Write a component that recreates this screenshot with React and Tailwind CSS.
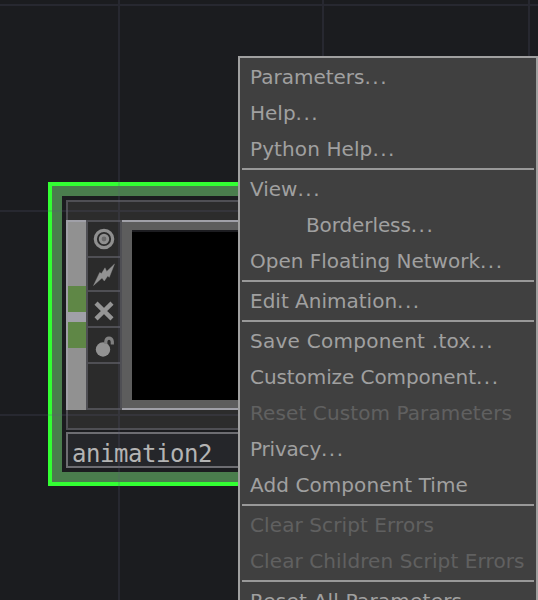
const menu = [
  { label: 'Parameters', dots: true },
  { label: 'Help', dots: true },
  { label: 'Python Help', dots: true, end: true, spacing: 'tracking-[0.1px]' },
  { label: 'View', dots: true },
  { label: 'Borderless', dots: true, indent: true, spacing: 'tracking-[-0.1px]' },
  { label: 'Open Floating Network', dots: true, end: true },
  { label: 'Edit Animation', dots: true, end: true },
  { label: 'Save Component .tox', dots: true, spacing: 'tracking-[0.26px]' },
  { label: 'Customize Component', dots: true, spacing: 'tracking-[-0.08px]' },
  { label: 'Reset Custom Parameters', disabled: true, spacing: 'tracking-[0.1px]' },
  { label: 'Privacy', dots: true, spacing: 'tracking-[-0.2px]' },
  { label: 'Add Component Time', end: true, spacing: 'tracking-[0.08px]' },
  { label: 'Clear Script Errors', disabled: true, spacing: 'tracking-[0.1px]' },
  { label: 'Clear Children Script Errors', disabled: true, end: true, spacing: 'tracking-[0.1px]' },
  { label: 'Reset All Parameters', spacing: 'tracking-[0.22px]' },
];

function ViewerIcon() {
  return (
    <svg width="32" height="34" viewBox="0 0 32 34" fill="none" stroke="#8f8f8f">
      <circle cx="16" cy="17" r="8.7" strokeWidth="3.2" />
      <circle cx="16" cy="17" r="3.8" strokeWidth="2.8" fill="#6a6a6a" />
    </svg>
  );
}

function BypassIcon() {
  return (
    <svg width="32" height="32" viewBox="0 0 32 32" fill="#929292" stroke="#929292" strokeWidth="0.4" strokeLinejoin="round">
      <path d="M5.5 27.5 11.7 14.5 13.5 15.5 17 9.8 18.7 13.4 26.5 6 21.3 19.3 19.7 18 16.3 23 14 20Z" />
    </svg>
  );
}

function CloseIcon() {
  return (
    <svg width="32" height="34" viewBox="0 0 32 34" stroke="#959595" strokeWidth="4.4">
      <path d="M8 11.2 24 26.8M24 11.2 8 26.8" />
    </svg>
  );
}

function LockIcon() {
  return (
    <svg width="32" height="34" viewBox="0 0 32 34">
      <circle cx="15" cy="21.5" r="7.2" fill="#929292" />
      <path d="M17.8 16V13.5Q18.2 10.2 21 10.2T24.3 13.5V16.5" fill="none" stroke="#808080" strokeWidth="3.2" />
    </svg>
  );
}

function OperatorNode() {
  return (
    <div className="absolute left-12 top-[182px] h-[304px] w-[260px] border-4 border-[#33ff33] bg-[#4a7d4d] p-[10px]">
      <div className="flex h-[276px] flex-col bg-[#1b1c1f] pl-1 pt-1">
        <div className="h-5 shrink-0 border-l-2 border-t-2 border-[#4f4f54] bg-[#2c2c2c]" />
        <div className="flex h-[190px] shrink-0">
          <div className="flex w-5 flex-col border-l-2 border-t-2 border-[#a0a0a8] bg-[#919191] pt-16">
            <div className="h-[26px] bg-[#5f8746]" />
            <div className="h-[10px] bg-[#a0a0a8]" />
            <div className="h-[26px] bg-[#5f8746]" />
          </div>
          <div className="flex w-9 flex-col gap-[2px] border-2 border-[#4f4f54] bg-[#4f4f54]">
            <div className="h-[34px] bg-[#2b2b2b]"><ViewerIcon /></div>
            <div className="h-8 bg-[#2b2b2b]"><BypassIcon /></div>
            <div className="h-[34px] bg-[#2b2b2b]"><CloseIcon /></div>
            <div className="h-[34px] bg-[#2b2b2b]"><LockIcon /></div>
            <div className="flex-1 bg-[#2b2b2b]" />
          </div>
          <div className="flex-1 border-y-2 border-[#a0a0a8] bg-[#5d5d5d] pb-2 pl-[10px] pt-2">
            <div className="h-full border-t-2 border-[#1c1c20] bg-black" />
          </div>
        </div>
        <div className="h-5 shrink-0 border-b-2 border-l-2 border-[#4f4f54] bg-[#2c2c2c]" />
        <div className="mt-[2px] h-9 shrink-0 border-2 border-[#6d6d72] bg-[#25262a] pl-1 font-['DejaVu_Sans_Mono',monospace] text-[24px] leading-[40px] tracking-[-0.45px] text-[#b4b4b4]">
          animation2
        </div>
      </div>
    </div>
  );
}

function GridLines() {
  return (
    <svg className="absolute inset-0" width="538" height="600" fill="#5a5a78" fillOpacity="0.2">
      <path d="M118 0h2v600h-2zM322 0h2v600h-2zM528 0h2v600h-2zM0 4h538v2H0zM0 210h538v2H0zM0 414h538v2H0z" />
    </svg>
  );
}

function ContextMenu() {
  return (
    <div className="absolute left-[238px] top-14 flex h-[544px] w-[300px] flex-col overflow-hidden border-x-2 border-t-2 border-[#a0a0a0] bg-[#404040] px-[2px] pt-[2px] font-['DejaVu_Sans',sans-serif] text-[20px] leading-[34px]">
      {menu.map(({ label, dots, indent, disabled, end, spacing = '' }) => (
        <div key={label} className="shrink-0">
          <div className={`h-9 whitespace-nowrap ${indent ? 'pl-16' : 'pl-2'} ${disabled ? 'text-[#606060]' : 'text-[#a0a0a0]'}`}>
            <span className={spacing}>{label}</span>
            {dots && <span className="tracking-[1.5px]">...</span>}
          </div>
          {end && <div className="mb-[2px] h-[2px] bg-[#999999]" />}
        </div>
      ))}
    </div>
  );
}

export default function App() {
  return (
    <main className="relative h-[600px] w-[538px] overflow-hidden bg-[#1b1c1f]">
      <OperatorNode />
      <GridLines />
      <ContextMenu />
    </main>
  );
}
